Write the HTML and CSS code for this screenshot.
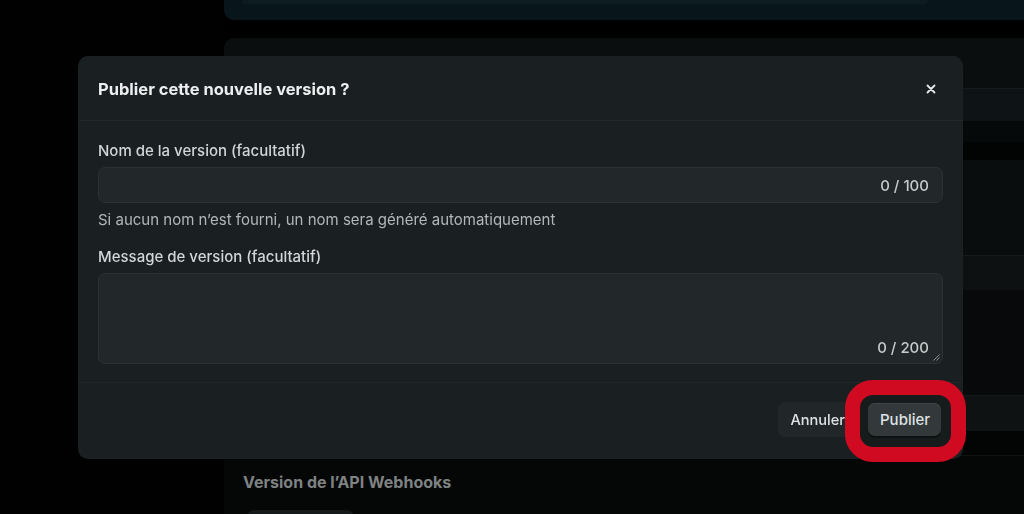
FILE: index.html
```html
<!DOCTYPE html>
<html lang="fr">
<head>
<meta charset="utf-8">
<title>Publier</title>
<link rel="stylesheet" href="styles.css">
</head>
<body>
<div class="app">
  <aside class="sidebar"></aside>
  <main class="main">
    <div class="top-card"><div class="top-inner"></div></div>
    <div class="card">
      <div class="row r1"></div>
      <div class="row r2"></div>
      <div class="gap"></div>
      <div class="row r3"></div>
      <div class="row r4"></div>
      <div class="row r5"></div>
      <div class="row r6"></div>
      <div class="row r7"></div>
      <div class="row r8"></div>
    </div>
    <section class="webhooks">
      <h3 class="wh-title">Version de l’API Webhooks</h3>
      <div class="wh-box"></div>
    </section>
  </main>
</div>

<div class="overlay">
  <div class="modal">
    <header class="modal-head">
      <h2 class="modal-title">Publier cette nouvelle version ?</h2>
      <button class="close" aria-label="Fermer">
        <svg width="10" height="10" viewBox="0 0 10 10"><path d="M1.5 1.5 L8.5 8.5 M8.5 1.5 L1.5 8.5" stroke="#e6e8e9" stroke-width="1.8" stroke-linecap="round"/></svg>
      </button>
    </header>
    <div class="modal-body">
      <label class="label">Nom de la version (facultatif)</label>
      <div class="input">
        <span class="count">0 / 100</span>
      </div>
      <p class="help">Si aucun nom n’est fourni, un nom sera généré automatiquement</p>
      <label class="label">Message de version (facultatif)</label>
      <div class="textarea">
        <span class="count">0 / 200</span>
        <svg class="grip" width="7" height="7" viewBox="0 0 7 7"><path d="M6.5 0.5 L0.5 6.5 M6.5 3.5 L3.5 6.5" stroke="#8b9091" stroke-width="1"/></svg>
      </div>
    </div>
    <footer class="modal-foot">
      <button class="btn ghost">Annuler</button>
      <div class="highlight">
        <button class="btn primary">Publier</button>
      </div>
    </footer>
  </div>
</div>
</body>
</html>
```

FILE: styles.css
```css
* { box-sizing: border-box; margin: 0; padding: 0; }
html, body { width: 1024px; height: 514px; overflow: hidden; }
body {
  background: #000;
  font-family: Inter, "Noto Sans", "Liberation Sans", sans-serif;
  color: #e6e8e9;
}
.app { display: flex; height: 514px; }
.sidebar { width: 224px; flex-shrink: 0; background: #010101; }
.main { flex: 1; display: flex; flex-direction: column; min-height: 0; }
.top-card {
  height: 20px;
  flex-shrink: 0;
  background: #08151a;
  border-radius: 0 0 0 10px;
  padding: 0 96px 0 18px;
}
.top-inner { height: 4px; background: #0c1c21; border-radius: 0 0 6px 6px; }
.card {
  margin-top: 18px;
  height: 417px;
  flex-shrink: 0;
  background: #0a0e0f;
  border-radius: 10px 0 0 0;
  display: flex;
  flex-direction: column;
}
.r1 { height: 50px; }
.r2 { height: 33px; background: #0e1315; border-top: 1px solid #151b1d; }
.gap { height: 21px; background: #06090a; }
.r3 { height: 18px; background: #020303; }
.r4 { height: 95px; background: #0a0d0e; }
.r5 { height: 35px; background: #0d1112; border-top: 1px solid #141a1c; }
.r6 { height: 105px; background: #07090a; }
.r7 { height: 35px; background: #0e1213; border-top: 1px solid #151b1c; }
.r8 { flex: 1; background: #030404; border-top: 1px solid #101416; }
.webhooks {
  flex: 1;
  min-height: 0;
  overflow: hidden;
  background: #050606;
  padding: 16px 19px 0;
  border-top: 1px solid #0e1214;
}
.wh-title {
  font-size: 16px;
  font-weight: 700;
  color: #7f8384;
  line-height: 20px;
}
.wh-box {
  margin: 18px 0 0 5px;
  width: 105px;
  height: 20px;
  background: #15191a;
  border-radius: 6px;
}

.overlay {
  position: fixed;
  inset: 0;
  padding: 57px 0 0 79px;
}
.modal {
  width: 883px;
  height: 401px;
  background: #1a1f21;
  border-radius: 9px;
  display: flex;
  flex-direction: column;
  box-shadow: 0 0 0 1px #1c2224;
}
.modal-head {
  height: 64px;
  display: flex;
  align-items: center;
  justify-content: space-between;
  padding: 0 26px 0 19px;
  border-bottom: 1px solid #222a2c;
}
.modal-title {
  font-size: 16.5px;
  font-weight: 700;
  color: #eceeef;
  letter-spacing: 0;
}
.close {
  background: none;
  border: 0;
  width: 10px;
  height: 10px;
  display: flex;
}
.modal-body {
  height: 261px;
  padding: 20px 19px 0;
  display: flex;
  flex-direction: column;
}
.label {
  font-size: 15px;
  line-height: 20px;
  font-weight: 500;
  color: #d3d6d7;
}
.input {
  margin-top: 6px;
  height: 36px;
  background: #222829;
  border: 1px solid #2b3234;
  border-radius: 7px;
  display: flex;
  align-items: center;
  justify-content: flex-end;
  padding-right: 13px;
}
.count {
  font-size: 15px;
  font-weight: 500;
  color: #c9cccd;
}
.help {
  margin-top: 7px;
  font-size: 15px;
  line-height: 19px;
  color: #b3b7b8;
  margin-bottom: 18px;
}
.textarea {
  position: relative;
  margin-top: 6px;
  height: 91px;
  background: #222829;
  border: 1px solid #2b3234;
  border-radius: 7px;
  display: flex;
  align-items: flex-end;
  justify-content: flex-end;
  padding: 0 13px 6px 0;
}
.grip { position: absolute; right: 2px; bottom: 2px; }
.modal-foot {
  flex: 1;
  border-top: 1px solid #20272a;
  display: flex;
  align-items: center;
  justify-content: flex-end;
  padding: 0 21px 2px;
  gap: 12px;
}
.btn {
  font-family: inherit;
  font-size: 15px;
  font-weight: 500;
  height: 35px;
  padding: 0 12px;
  border-radius: 7px;
  border: 0;
  color: #dfe2e3;
}
.ghost { background: #212729; padding: 0 11px 0 12px; font-size: 14.6px; }
.highlight { position: relative; }
.highlight::before {
  content: "";
  position: absolute;
  left: -23px;
  top: -23px;
  right: -25px;
  bottom: -26px;
  border: 15px solid #d00b21;
  border-radius: 28px;
  background: #161b1c;
  z-index: 0;
}
.primary {
  position: relative;
  z-index: 1;
  background: #33393b;
  width: 73px;
  height: 33px;
  box-shadow: 0 2px 0 #0d1011, inset 0 1px 0 #3f4648;
}
```
